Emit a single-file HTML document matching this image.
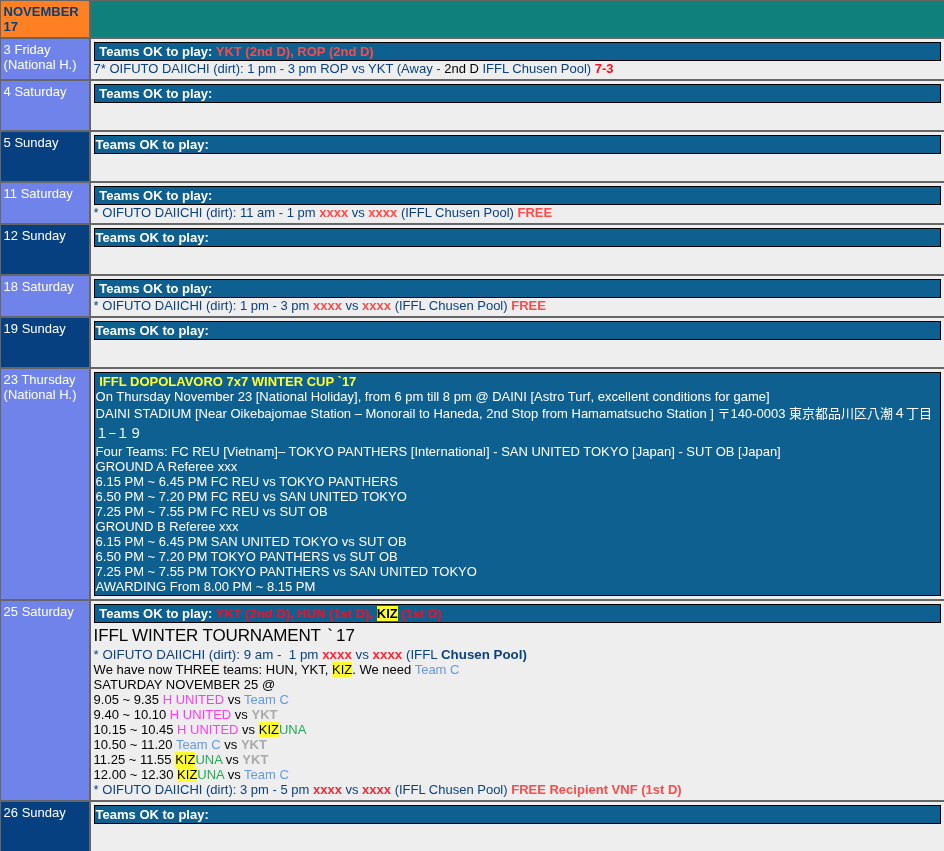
<!DOCTYPE html>
<html>
<head>
<meta charset="utf-8">
<title>November 17</title>
<style>
html,body{margin:0;padding:0;background:#eeeeee;overflow:hidden;}
body{font-family:"Liberation Sans",sans-serif;font-size:13px;line-height:15px;color:#000;}
table{will-change:transform;border-collapse:collapse;position:absolute;left:-1px;top:-1px;width:947px;table-layout:fixed;}
td{border:2px solid #666666;padding:3px;vertical-align:top;background:#eeeeee;color:#0a4080;}
td.d{width:82px;color:#ffffff;padding-left:2.6px;padding-right:3.4px;}
td.a{background:#7083eb;}
td.b{background:#064080;}
td.h{background:#ff8022;color:#08407c;font-weight:bold;}
td.t{background:#10807c;}
.bx{border:1px solid #000;background:#0e6090;color:#fff;padding:1px 1.4px 1px 0.6px;font-weight:bold;white-space:pre;}
.big{font-weight:normal;white-space:normal;}
.big b{color:#ffff33;white-space:pre;}
.r{color:#ff4a4a;font-weight:bold;}
.r2{color:#ff2434;font-weight:bold;}
.r3{color:#ff0a1e;font-weight:bold;}
.k{color:#000;}
.n{color:#0a4080;}
.hl{background:#ffff30;color:#000;}
.m{color:#ff3cf0;}
.c{color:#6699e0;}
.g{color:#aaaaaa;font-weight:bold;}
.gr{color:#22aa55;}
.ln{white-space:pre;margin-left:-0.4px;}
</style>
</head>
<body>
<table>
<tr style="height:38px"><td class="d h">NOVEMBER<br>17</td><td class="t"></td></tr>
<tr style="height:42px"><td class="d a">3 Friday<br>(National H.)</td><td><div class="bx"> Teams OK to play: <span class="r">YKT (2nd D), ROP (2nd D)</span></div><div class="ln">7* OIFUTO DAIICHI (dirt): 1 pm - 3 pm ROP vs YKT (Away - <span class="k">2nd D</span> IFFL Chusen Pool) <span class="r3">7-3</span></div></td></tr>
<tr style="height:51px"><td class="d a">4 Saturday</td><td><div class="bx"> Teams OK to play:</div></td></tr>
<tr style="height:51px"><td class="d b">5 Sunday</td><td><div class="bx">Teams OK to play:</div></td></tr>
<tr style="height:42px"><td class="d a">11 Saturday</td><td><div class="bx"> Teams OK to play:</div><div class="ln">* OIFUTO DAIICHI (dirt): 11 am - 1 pm <span class="r">xxxx</span> vs <span class="r">xxxx</span> (IFFL Chusen Pool) <span class="r">FREE</span></div></td></tr>
<tr style="height:51px"><td class="d b">12 Sunday</td><td><div class="bx">Teams OK to play:</div></td></tr>
<tr style="height:42px"><td class="d a">18 Saturday</td><td><div class="bx"> Teams OK to play:</div><div class="ln">* OIFUTO DAIICHI (dirt): 1 pm - 3 pm <span class="r">xxxx</span> vs <span class="r">xxxx</span> (IFFL Chusen Pool) <span class="r">FREE</span></div></td></tr>
<tr style="height:51px"><td class="d b">19 Sunday</td><td><div class="bx">Teams OK to play:</div></td></tr>
<tr style="height:232px"><td class="d a">23 Thursday<br>(National H.)</td><td><div class="bx big"><b> IFFL DOPOLAVORO 7x7 WINTER CUP `17</b><br>On Thursday November 23 [National Holiday], from 6 pm till 8 pm @ DAINI [Astro Turf, excellent conditions for game]<br><div id="cj1" style="height:20px;line-height:20px;white-space:pre;font-family:'Liberation Sans','Noto Sans CJK JP',sans-serif">DAINI STADIUM [Near Oikebajomae Station – Monorail to Haneda, 2nd Stop from Hamamatsucho Station ] 〒140-0003 東京都品川区八潮４丁目</div><div id="cj2" style="height:20px;line-height:20px;white-space:pre;font-family:'Liberation Sans','Noto Sans CJK JP',sans-serif">１−１９</div>Four Teams: FC REU [Vietnam]– TOKYO PANTHERS [International] - SAN UNITED TOKYO [Japan] - SUT OB [Japan]<br>GROUND A Referee xxx<br>6.15 PM ~ 6.45 PM FC REU vs TOKYO PANTHERS<br>6.50 PM ~ 7.20 PM FC REU vs SAN UNITED TOKYO<br>7.25 PM ~ 7.55 PM FC REU vs SUT OB<br>GROUND B Referee xxx<br>6.15 PM ~ 6.45 PM SAN UNITED TOKYO vs SUT OB<br>6.50 PM ~ 7.20 PM TOKYO PANTHERS vs SUT OB<br>7.25 PM ~ 7.55 PM TOKYO PANTHERS vs SAN UNITED TOKYO<br>AWARDING From 8.00 PM ~ 8.15 PM</div></td></tr>
<tr style="height:201px"><td class="d a">25 Saturday</td><td><div class="bx"> Teams OK to play: <span class="r3">YKT (2nd D), HUN (1st D), <span class="hl">KIZ</span> (1st D)</span></div><div class="ln k" style="font-size:17px;line-height:24px;position:relative;top:1px"><span style="letter-spacing:-0.13px">IFFL WINTER TOURNAMENT </span><span style="margin-left:2.2px">`</span><span style="margin-left:3px">17</span></div><div class="ln" style="font-size:13.33px">* OIFUTO DAIICHI (dirt): 9 am -  1 pm <span class="r2">xxxx</span> vs <span class="r2">xxxx</span> (IFFL <b>Chusen Pool)</b></div><div class="ln k">We have now THREE teams: HUN, YKT, <span class="hl">KIZ</span>. We need <span class="c">Team C</span></div><div class="ln k">SATURDAY NOVEMBER 25 @</div><div class="ln k">9.05 ~ 9.35 <span class="m">H UNITED</span> vs <span class="c">Team C</span></div><div class="ln k">9.40 ~ 10.10 <span class="m">H UNITED</span> vs <span class="g">YKT</span></div><div class="ln k">10.15 ~ 10.45 <span class="m">H UNITED</span> vs <span class="hl">KIZ</span><span class="gr">UNA</span></div><div class="ln k">10.50 ~ 11.20 <span class="c">Team C</span> vs <span class="g">YKT</span></div><div class="ln k">11.25 ~ 11.55 <span class="hl">KIZ</span><span class="gr">UNA</span> vs <span class="g">YKT</span></div><div class="ln k">12.00 ~ 12.30 <span class="hl">KIZ</span><span class="gr">UNA</span> vs <span class="c">Team C</span></div><div class="ln">* OIFUTO DAIICHI (dirt): 3 pm - 5 pm <span class="r2">xxxx</span> vs <span class="r2">xxxx</span> (IFFL Chusen Pool) <span class="r">FREE Recipient VNF (1st D)</span></div></td></tr>
<tr style="height:60px"><td class="d b">26 Sunday</td><td><div class="bx">Teams OK to play:</div></td></tr>
</table>
</body>
</html>
